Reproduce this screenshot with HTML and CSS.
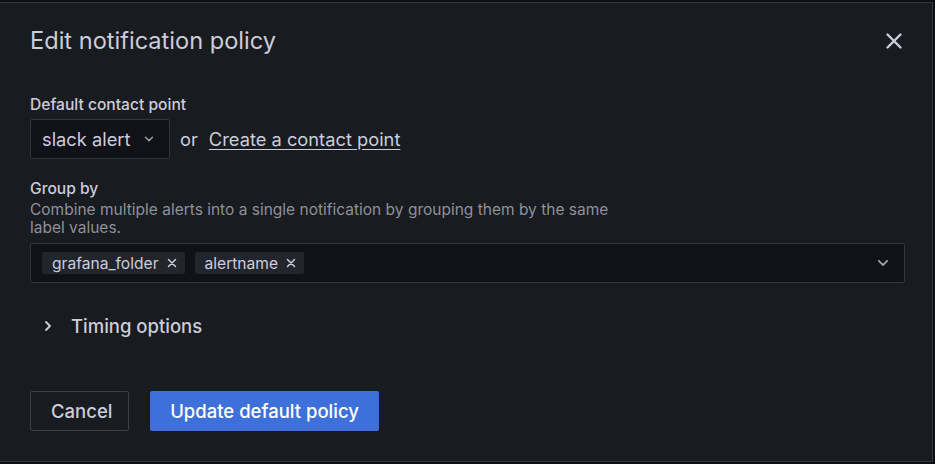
FILE: index.html
```html
<!DOCTYPE html>
<html>
<head>
<meta charset="utf-8">
<link rel="stylesheet" href="styles.css">
</head>
<body>
<div class="modal">
  <div class="header">
    <h2 class="title">Edit notification policy</h2>
    <button class="close" aria-label="Close">
      <svg width="18" height="18" viewBox="0 0 18 18"><path d="M2.5 2.5 L15.5 15.5 M15.5 2.5 L2.5 15.5" stroke="currentColor" stroke-width="2.4" stroke-linecap="round"/></svg>
    </button>
  </div>
  <div class="content">
    <div class="field">
      <label class="label">Default contact point</label>
      <div class="row">
        <div class="select">
          <span>slack alert</span>
          <svg class="chev" width="10" height="6" viewBox="0 0 10 6"><path d="M1.5 1.2 L5 4.6 L8.5 1.2" fill="none" stroke="currentColor" stroke-width="1.5" stroke-linecap="round" stroke-linejoin="round"/></svg>
        </div>
        <span class="or">or</span>
        <a class="link" href="#">Create a contact point</a>
      </div>
    </div>
    <div class="field group">
      <label class="label">Group by</label>
      <p class="desc">Combine multiple alerts into a single notification by grouping them by the same label values.</p>
      <div class="multi">
        <div class="tags">
          <span class="tag">grafana_folder<svg width="10" height="10" viewBox="0 0 10 10"><path d="M1.5 1.5 L8.5 8.5 M8.5 1.5 L1.5 8.5" stroke="currentColor" stroke-width="1.5" stroke-linecap="round"/></svg></span>
          <span class="tag">alertname<svg width="10" height="10" viewBox="0 0 10 10"><path d="M1.5 1.5 L8.5 8.5 M8.5 1.5 L1.5 8.5" stroke="currentColor" stroke-width="1.5" stroke-linecap="round"/></svg></span>
        </div>
        <svg class="chev big" width="12" height="8" viewBox="0 0 12 8"><path d="M1.8 1.8 L6 6 L10.2 1.8" fill="none" stroke="currentColor" stroke-width="1.8" stroke-linecap="round" stroke-linejoin="round"/></svg>
      </div>
    </div>
    <div class="timing">
      <svg class="chev-right" width="8" height="12" viewBox="0 0 8 12"><path d="M2 2 L6 6 L2 10" fill="none" stroke="currentColor" stroke-width="1.8" stroke-linecap="round" stroke-linejoin="round"/></svg>
      <span>Timing options</span>
    </div>
    <div class="actions">
      <button class="btn secondary">Cancel</button>
      <button class="btn primary">Update default policy</button>
    </div>
  </div>
</div>
</body>
</html>
```

FILE: styles.css
```css
* { box-sizing: border-box; }
html, body { margin: 0; padding: 0; }
body {
  background: #0e0f12;
  font-family: Inter, "Noto Sans", sans-serif;
  color: #ccccdc;
  width: 935px;
  height: 464px;
  overflow: hidden;
}
.modal {
  margin: 2px 0 0 -1px;
  width: 934px;
  height: 460px;
  background: #181b1f;
  border: 1px solid #34373d;
}
.header {
  display: flex;
  justify-content: space-between;
  align-items: flex-start;
  padding: 24px 29px 0 30px;
  height: 78px;
}
.title {
  margin: 0;
  font-size: 23.6px;
  font-weight: 400;
  line-height: 27px;
  color: #ccccdc;
}
.close {
  background: none;
  border: 0;
  padding: 0;
  margin-top: 5px;
  color: #ccccdc;
  display: flex;
}
.content {
  padding: 14px 27px 0 30px;
}
.field { display: flex; flex-direction: column; }
.label {
  font-size: 15.6px;
  font-weight: 500;
  line-height: 19px;
  margin-bottom: 5px;
}
.row { display: flex; align-items: center; }
.select {
  width: 140px;
  height: 40px;
  background: #111217;
  border: 1px solid #33363c;
  border-radius: 2px;
  display: flex;
  align-items: center;
  justify-content: space-between;
  padding: 0 15px 0 11px;
  font-size: 18.3px;
}
.chev { color: #9a9ca6; }
.or { margin-left: 10px; font-size: 18.3px; }
.link {
  margin-left: 11px;
  color: #ccccdc;
  font-size: 18.3px;
  text-decoration: underline;
  text-underline-offset: 3px;
}
.group { margin-top: 20px; }
.group .label { margin-bottom: 3px; }
.desc {
  margin: 0 0 6px;
  font-size: 15.5px;
  line-height: 18px;
  color: #8f909b;
  max-width: 610px;
}
.multi {
  height: 40px;
  background: #111217;
  border: 1px solid #33363c;
  border-radius: 2px;
  display: flex;
  align-items: center;
  justify-content: space-between;
  padding: 0 15px 0 11px;
}
.tags { display: flex; gap: 10px; }
.tag {
  display: inline-flex;
  align-items: center;
  gap: 8px;
  height: 22px;
  padding: 0 8px 0 10px;
  background: #22252b;
  border-radius: 2px;
  font-size: 15.6px;
  color: #ccccdc;
}
.tag svg { color: #ccccdc; }
.timing {
  display: flex;
  align-items: center;
  margin-top: 32px;
  padding-left: 14px;
  height: 22px;
  font-size: 18.5px;
  font-weight: 500;
}
.chev-right { color: #ccccdc; margin-right: 19px; }
.actions {
  display: flex;
  gap: 21px;
  margin-top: 54px;
}
.btn {
  height: 40px;
  border-radius: 2px;
  font-family: inherit;
  font-size: 18.5px;
  font-weight: 500;
  padding: 0 20px;
}
.secondary {
  background: transparent;
  border: 1px solid #3b3e45;
  color: #ccccdc;
  width: 99px;
}
.primary {
  background: #3d71d9;
  border: 0;
  color: #ffffff;
  width: 229px;
}
```
